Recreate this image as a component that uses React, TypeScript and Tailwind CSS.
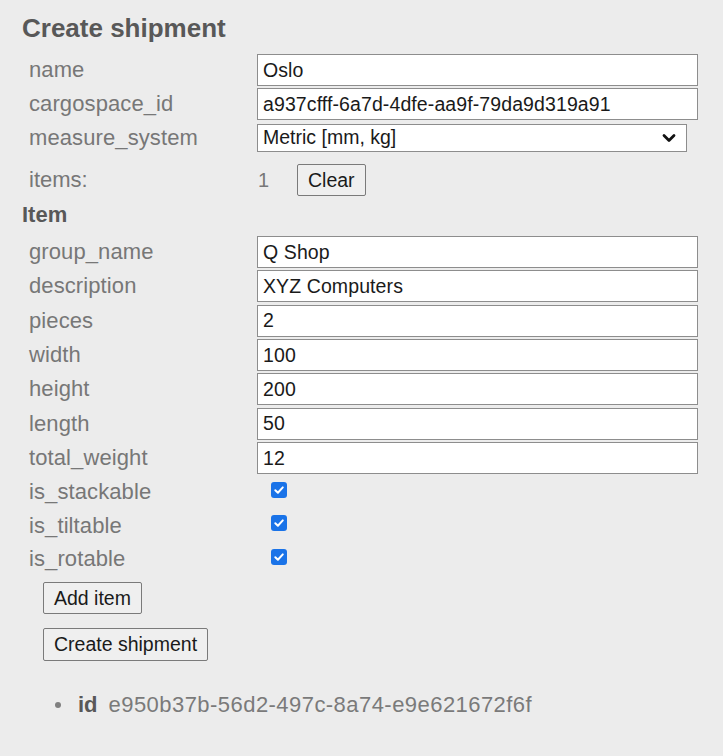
import React from "react";

const font = { fontFamily: '"Liberation Sans", Arial, sans-serif' };

function Row({ label, children, h = "h-[34px]" }: { label: string; children: React.ReactNode; h?: string }) {
  return (
    <div className={"flex items-center " + h}>
      <div className="w-[235px] pl-[7px] text-[22px] leading-[26px] tracking-[0.1px] text-[#777]">{label}</div>
      {children}
    </div>
  );
}

function TextInput({ value }: { value: string }) {
  return (
    <input
      readOnly
      value={value}
      className="h-[32px] w-[441px] border border-[#8d8d8d] bg-white px-[5px] text-[19.5px] tracking-[0.1px] text-[#1a1a1a] outline-none"
      style={font}
    />
  );
}

function Check() {
  return (
    <div className="mb-[5px] ml-[14px] flex h-[16px] w-[16px] items-center justify-center rounded-[3px] bg-[#1a73e8]">
      <svg width="12" height="12" viewBox="0 0 12 12">
        <path d="M2.3 6.2 L4.9 8.7 L9.8 3.4" fill="none" stroke="white" strokeWidth="2" strokeLinecap="round" strokeLinejoin="round" />
      </svg>
    </div>
  );
}

function Btn({ children, className }: { children: React.ReactNode; className?: string }) {
  return (
    <button
      className={"rounded-[2px] border border-[#7a7a7a] bg-[#efefef] px-[10px] text-[19.5px] leading-[22px] text-[#1a1a1a] " + (className ?? "")}
      style={font}
    >
      {children}
    </button>
  );
}

export default function App() {
  return (
    <div className="min-h-[756px] bg-[#ececec] pl-[22px] pt-[13px]" style={font}>
      <h2 className="text-[26px] font-bold leading-[30px] text-[#585858]">Create shipment</h2>
      <div className="mt-[10px]">
        <Row label="name">
          <TextInput value="Oslo" />
        </Row>
        <Row label="cargospace_id">
          <TextInput value="a937cfff-6a7d-4dfe-aa9f-79da9d319a91" />
        </Row>
        <Row label="measure_system">
          <div className="flex h-[28px] w-[430px] items-center justify-between border border-[#8d8d8d] bg-white pl-[5px] pr-[10px] text-[19.5px] text-[#1a1a1a]">
            <span>Metric [mm, kg]</span>
            <svg width="14" height="10" viewBox="0 0 14 10">
              <path d="M2 2.5 L7 7.5 L12 2.5" fill="none" stroke="#111" strokeWidth="2.8" strokeLinecap="round" strokeLinejoin="round" />
            </svg>
          </div>
        </Row>
        <div className="mt-[5px] flex h-[40px] items-center">
          <div className="w-[235px] pl-[7px] text-[22px] leading-[26px] text-[#777]">items:</div>
          <span className="w-[40px] pl-[1px] text-[20px] text-[#777]">1</span>
          <Btn className="h-[32px]">Clear</Btn>
        </div>
        <div className="mt-[2px] text-[22px] font-bold leading-[26px] text-[#585858]">Item</div>
        <div className="mt-[7px]">
          <Row label="group_name" h="h-[34.33px]">
            <TextInput value="Q Shop" />
          </Row>
          <Row label="description" h="h-[34.33px]">
            <TextInput value="XYZ Computers" />
          </Row>
          <Row label="pieces" h="h-[34.33px]">
            <TextInput value="2" />
          </Row>
          <Row label="width" h="h-[34.33px]">
            <TextInput value="100" />
          </Row>
          <Row label="height" h="h-[34.33px]">
            <TextInput value="200" />
          </Row>
          <Row label="length" h="h-[34.33px]">
            <TextInput value="50" />
          </Row>
          <Row label="total_weight" h="h-[34.33px]">
            <TextInput value="12" />
          </Row>
          <Row label="is_stackable" h="h-[33.5px]">
            <Check />
          </Row>
          <Row label="is_tiltable" h="h-[33.5px]">
            <Check />
          </Row>
          <Row label="is_rotable" h="h-[33.5px]">
            <Check />
          </Row>
        </div>
        <div className="ml-[21px] mt-[6px] flex flex-col items-start">
          <Btn className="h-[32px]">Add item</Btn>
          <Btn className="mt-[14px] h-[33px]">Create shipment</Btn>
        </div>
        <div className="ml-[33px] mt-[31px] flex items-center text-[22px] leading-[26px]">
          <span className="h-[6px] w-[6px] rounded-full bg-[#808080]" />
          <span className="ml-[17px] font-bold text-[#585858]">id</span>
          <span className="ml-[11px] tracking-[0.45px] text-[#7a7a7a]">e950b37b-56d2-497c-8a74-e9e621672f6f</span>
        </div>
      </div>
    </div>
  );
}
